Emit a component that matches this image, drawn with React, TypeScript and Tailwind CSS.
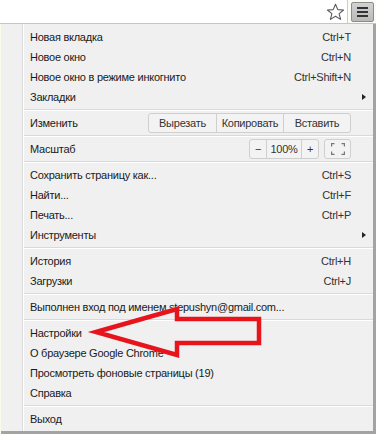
import React from "react";

type Row =
  | { kind: "item"; label: string; key?: string; sub?: boolean }
  | { kind: "sep" }
  | { kind: "edit" }
  | { kind: "zoom" };

const rows: Row[] = [
  { kind: "item", label: "Новая вкладка", key: "Ctrl+T" },
  { kind: "item", label: "Новое окно", key: "Ctrl+N" },
  { kind: "item", label: "Новое окно в режиме инкогнито", key: "Ctrl+Shift+N" },
  { kind: "item", label: "Закладки", sub: true },
  { kind: "sep" },
  { kind: "edit" },
  { kind: "sep" },
  { kind: "zoom" },
  { kind: "sep" },
  { kind: "item", label: "Сохранить страницу как...", key: "Ctrl+S" },
  { kind: "item", label: "Найти...", key: "Ctrl+F" },
  { kind: "item", label: "Печать...", key: "Ctrl+P" },
  { kind: "item", label: "Инструменты", sub: true },
  { kind: "sep" },
  { kind: "item", label: "История", key: "Ctrl+H" },
  { kind: "item", label: "Загрузки", key: "Ctrl+J" },
  { kind: "sep" },
  { kind: "item", label: "Выполнен вход под именем stepushyn@gmail.com..." },
  { kind: "sep" },
  { kind: "item", label: "Настройки" },
  { kind: "item", label: "О браузере Google Chrome" },
  { kind: "item", label: "Просмотреть фоновые страницы (19)" },
  { kind: "item", label: "Справка" },
  { kind: "sep" },
  { kind: "item", label: "Выход" },
];

function Star() {
  return (
    <svg width="19" height="18" viewBox="0 0 19 18" fill="none">
      <path
        d="M9.5 1.2 L11.8 6.6 L17.6 7 L13.1 10.7 L14.6 16.4 L9.5 13.3 L4.4 16.4 L5.9 10.7 L1.4 7 L7.2 6.6 Z"
        stroke="#5a5a5a"
        strokeWidth="1.1"
        strokeLinejoin="round"
      />
    </svg>
  );
}

function FullscreenIcon() {
  return (
    <svg width="14" height="12" viewBox="0 0 14 12" fill="none" stroke="#777" strokeWidth="1.2">
      <path d="M0.6 3.5 V0.6 H3.5" />
      <path d="M10.5 0.6 H13.4 V3.5" />
      <path d="M0.6 8.5 V11.4 H3.5" />
      <path d="M10.5 11.4 H13.4 V8.5" />
    </svg>
  );
}

function MenuRow({ row }: { row: Row }) {
  if (row.kind === "sep") {
    return (
      <div className="h-[6px] flex flex-col justify-center">
        <div className="h-px bg-[#d9d9d9]" />
        <div className="h-px bg-white" />
      </div>
    );
  }
  if (row.kind === "edit") {
    return (
      <div className="h-[20px] flex items-center pl-[6px]">
        <span className="flex-1">Изменить</span>
        <div className="flex h-[20px] mr-[22px] border border-[#cfcfcf] rounded-[3px] bg-[#f3f3f3] text-[#333]">
          <div className="w-[68px] flex items-center justify-center border-r border-[#cfcfcf]">Вырезать</div>
          <div className="w-[67px] flex items-center justify-center border-r border-[#cfcfcf]">Копировать</div>
          <div className="w-[66px] flex items-center justify-center">Вставить</div>
        </div>
      </div>
    );
  }
  if (row.kind === "zoom") {
    return (
      <div className="h-[20px] flex items-center pl-[6px]">
        <span className="flex-1">Масштаб</span>
        <div className="flex h-[20px] border border-[#cfcfcf] rounded-[3px] bg-[#f3f3f3] text-[#333]">
          <div className="w-[17px] flex items-center justify-center border-r border-[#cfcfcf]">−</div>
          <div className="w-[35px] flex items-center justify-center border-r border-[#cfcfcf]">100%</div>
          <div className="w-[16px] flex items-center justify-center">+</div>
        </div>
        <div className="flex h-[20px] w-[27px] ml-[5px] mr-[22px] items-center justify-center border border-[#cfcfcf] rounded-[3px] bg-[#f3f3f3]">
          <FullscreenIcon />
        </div>
      </div>
    );
  }
  return (
    <div className="h-[20px] flex items-center pl-[6px]">
      <span className="flex-1 whitespace-nowrap">{row.label}</span>
      {row.key && <span className="mr-[22px] text-[#333]">{row.key}</span>}
      {row.sub && (
        <span className="mr-[7px] w-0 h-0 border-y-[3.5px] border-y-transparent border-l-[4px] border-l-[#222]" />
      )}
    </div>
  );
}

export default function App() {
  return (
    <div
      className="relative w-[376px] h-[434px] overflow-hidden bg-[#fbfbea] text-[11px] tracking-[-0.25px] text-[#1a1a1a]"
      style={{ fontFamily: '"Liberation Sans", Arial, sans-serif' }}
    >
      <div className="flex h-[24px] border-b border-[#c6c6c6] bg-[#fcfcf6]">
        <div className="flex-1 flex items-center justify-end pr-[2px] bg-white border-r border-[#cdcdcd]">
          <Star />
        </div>
        <div className="w-[28px] flex items-center justify-center">
          <div className="w-[23px] h-[20px] rounded-[2px] border border-[#8c8c8c] bg-gradient-to-b from-[#d2d2d2] to-[#b9b9b9] flex flex-col items-center justify-center gap-[2px]">
            <div className="w-[11px] h-[2px] bg-[#333]" />
            <div className="w-[11px] h-[2px] bg-[#333]" />
            <div className="w-[11px] h-[2px] bg-[#333]" />
          </div>
        </div>
      </div>

      <div className="ml-px w-[375px] h-[410px] flex bg-[#f0f0f0] border-r-[3px] border-b-[3px] border-[#a3a3a0]">
        <div className="w-[22px] shrink-0 border-r border-[#dcdcdc]" />
        <div className="w-px bg-white" />
        <div className="flex-1 flex flex-col pt-[3px]">
          {rows.map((r, i) => (
            <MenuRow key={i} row={r} />
          ))}
        </div>
      </div>

      <svg className="absolute left-0 top-0 pointer-events-none" width="376" height="434" viewBox="0 0 376 434">
        <path
          d="M96 332 L177 309 L177 319 L259 319 L259 343 L177 343 L177 355 Z"
          fill="none"
          stroke="#e8141c"
          strokeWidth="4.5"
          strokeLinejoin="miter"
        />
      </svg>
    </div>
  );
}
